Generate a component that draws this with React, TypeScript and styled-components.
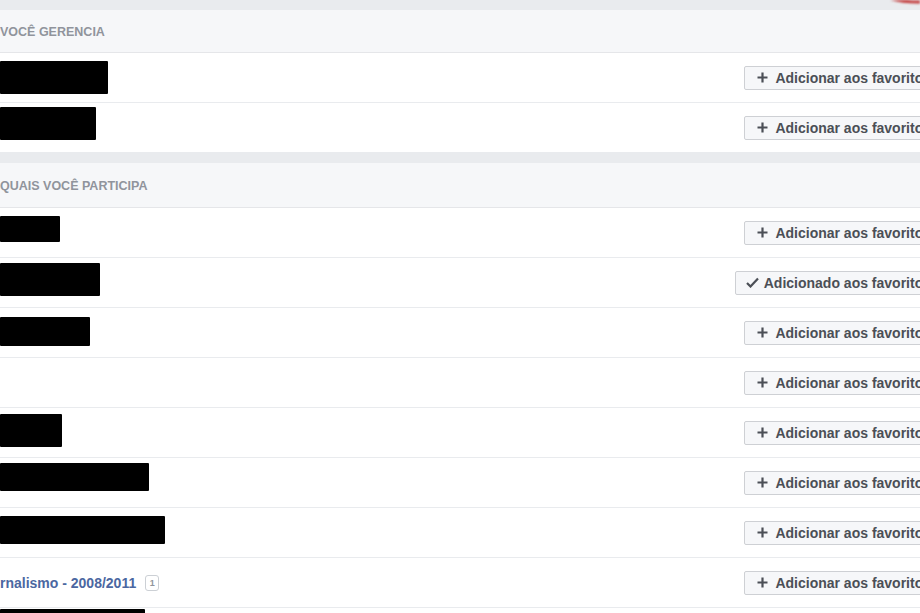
import styled, { createGlobalStyle } from 'styled-components'

const GlobalStyle = createGlobalStyle`
  html, body {
    margin: 0;
    padding: 0;
    background: #e9ebee;
    overflow: hidden;
  }
  #root {
    width: 920px;
    height: 613px;
    overflow: hidden;
    position: relative;
  }
`

const Page = styled.div`
  width: 956px;
  padding-top: 10px;
  display: flex;
  flex-direction: column;
  gap: 10px;
  font-family: 'Liberation Sans', Arial, sans-serif;
`

const Section = styled.section`
  background: #ffffff;
  display: flex;
  flex-direction: column;
`

const SectionHeader = styled.div<{ $h: number }>`
  height: ${p => p.$h}px;
  box-sizing: border-box;
  display: flex;
  align-items: center;
  background: #f6f7f9;
  border-bottom: 1px solid #e5e6e9;
  color: #90949c;
  font-size: 12.5px;
  font-weight: bold;
  text-transform: uppercase;
  padding-top: 2px;
`

const Row = styled.div`
  height: 50px;
  box-sizing: border-box;
  display: flex;
  align-items: center;
  padding-right: 12px;
  border-bottom: 1px solid #e9ebee;
`

const Name = styled.div`
  flex: 1;
  align-self: stretch;
  display: flex;
  align-items: center;
  gap: 9px;
`

const Redaction = styled.div<{ $w: number; $h: number; $top: number }>`
  width: ${p => p.$w}px;
  height: ${p => p.$h}px;
  margin-top: ${p => p.$top}px;
  align-self: flex-start;
  background: #000;
  border-radius: 1px;
`

const GroupLink = styled.span`
  color: #4b67a1;
  font-size: 14px;
  font-weight: bold;
`

const Badge = styled.span`
  display: inline-flex;
  align-items: center;
  justify-content: center;
  width: 14px;
  height: 16px;
  border: 1px solid #ccd0d5;
  border-radius: 3px;
  color: #90949c;
  font-size: 9px;
  font-weight: bold;
  box-sizing: border-box;
`

const FavButton = styled.button<{ $added?: boolean }>`
  height: 24px;
  box-sizing: border-box;
  display: inline-flex;
  align-items: center;
  gap: ${p => (p.$added ? 5 : 7)}px;
  padding: 0 ${p => (p.$added ? 12 : 12)}px 0 ${p => (p.$added ? 10 : 12)}px;
  background: #f6f7f9;
  border: 1px solid #ced0d4;
  border-radius: 2px;
  color: #4b4f56;
  font-family: 'Liberation Sans', Arial, sans-serif;
  font-size: 14px;
  font-weight: bold;
  white-space: nowrap;
`

const Halo = styled.svg`
  position: absolute;
  top: 0;
  right: 0;
  width: 60px;
  height: 8px;
  filter: blur(0.8px);
`

const PlusIcon = () => (
  <svg width="11" height="11" viewBox="0 0 11 11">
    <path d="M5.5 0.5v10M0.5 5.5h10" stroke="#4b4f56" strokeWidth="2.2" />
  </svg>
)

const CheckIcon = () => (
  <svg width="13" height="11" viewBox="0 0 13 11">
    <path d="M1 6l3.5 3.5L12 1.5" fill="none" stroke="#4b4f56" strokeWidth="2.2" />
  </svg>
)

type Item = {
  bar?: { w: number; h: number; top: number }
  text?: string
  badge?: string
  added?: boolean
}

const managed: Item[] = [
  { bar: { w: 108, h: 33, top: 8 } },
  { bar: { w: 96, h: 33, top: 4 } },
]

const joined: Item[] = [
  { bar: { w: 60, h: 26, top: 8 } },
  { bar: { w: 100, h: 33, top: 5 }, added: true },
  { bar: { w: 90, h: 29, top: 9 } },
  {},
  { bar: { w: 62, h: 33, top: 6 } },
  { bar: { w: 149, h: 28, top: 5 } },
  { bar: { w: 165, h: 28, top: 8 } },
  { text: 'rnalismo - 2008/2011', badge: '1' },
  { bar: { w: 145, h: 30, top: 1 } },
]

function GroupRow({ item }: { item: Item }) {
  return (
    <Row>
      <Name>
        {item.bar && <Redaction $w={item.bar.w} $h={item.bar.h} $top={item.bar.top} />}
        {item.text && <GroupLink>{item.text}</GroupLink>}
        {item.badge && <Badge>{item.badge}</Badge>}
      </Name>
      <FavButton $added={item.added}>
        {item.added ? <CheckIcon /> : <PlusIcon />}
        {item.added ? 'Adicionado aos favoritos' : 'Adicionar aos favoritos'}
      </FavButton>
    </Row>
  )
}

export default function App() {
  return (
    <>
      <GlobalStyle />
      <Page>
        <Section>
          <SectionHeader $h={43}>Você gerencia</SectionHeader>
          {managed.map((item, i) => (
            <GroupRow key={i} item={item} />
          ))}
        </Section>
        <Section>
          <SectionHeader $h={45}>Quais você participa</SectionHeader>
          {joined.map((item, i) => (
            <GroupRow key={i} item={item} />
          ))}
        </Section>
      </Page>
      <Halo viewBox="0 0 60 8">
        <ellipse cx="58" cy="-26" rx="56" ry="28" fill="none" stroke="#c23a3a" strokeWidth="3" />
      </Halo>
    </>
  )
}
